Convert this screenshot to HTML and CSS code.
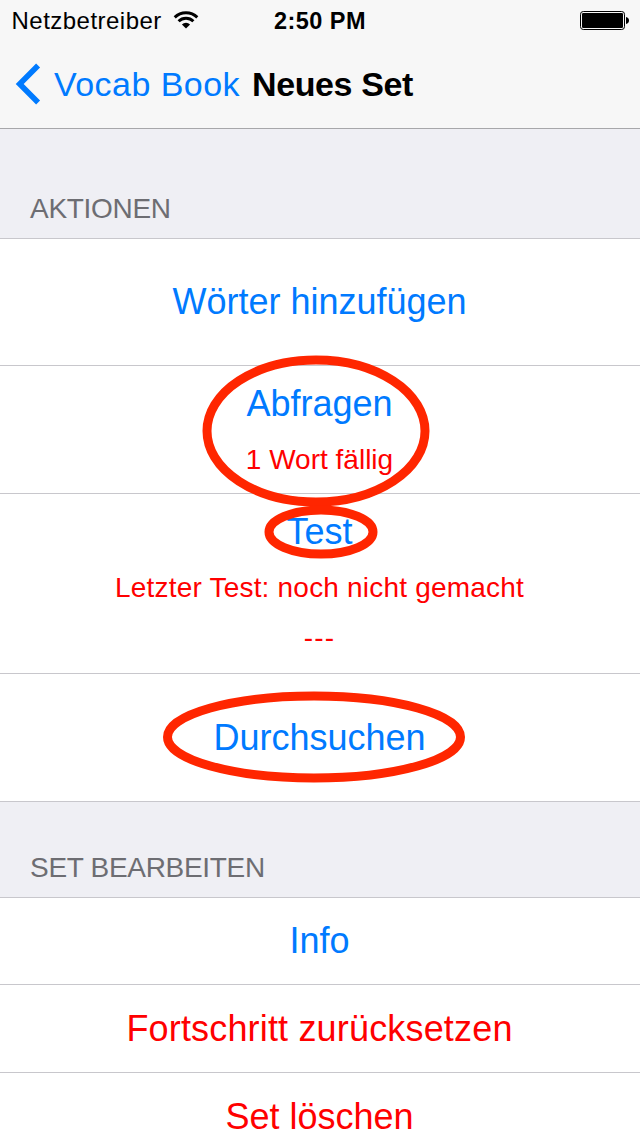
FILE: index.html
```html
<!DOCTYPE html>
<html lang="de">
<head>
<meta charset="utf-8">
<title>Neues Set</title>
<link rel="stylesheet" href="styles.css">
</head>
<body>
<div class="screen">
  <header class="top">
    <div class="status">
      <div class="carrier"><span>Netzbetreiber</span>
        <svg class="wifi" width="26" height="18" viewBox="0 0 26 18" fill="none" stroke="#000" stroke-width="2.900">
          <path d="M1.700 6.400A16 16 0 0 1 24.300 6.400"/>
          <path d="M5.600 10.300A10.500 10.500 0 0 1 20.400 10.300"/>
          <path d="M13 17.400L8.900 13.400A5.900 5.900 0 0 1 17.100 13.400Z" fill="#000" stroke="none"/>
        </svg>
      </div>
      <div class="time">2:50 PM</div>
      <svg class="battery" width="49" height="20" viewBox="0 0 49 20">
        <rect x=".5" y=".5" width="44" height="18" rx="2.800" fill="none" stroke="#000"/>
        <rect x="2" y="2" width="41" height="15" rx="1.200"/>
        <path d="M46 6c2 .3 3 1.600 3 3.500s-1 3.200-3 3.500z"/>
      </svg>
    </div>
    <nav class="nav">
      <svg class="chevron" width="26" height="42" viewBox="0 0 26 42" fill="none" stroke="#007aff" stroke-width="5.600"><path d="M23.100 2.500L4.700 21L23.100 39.500"/></svg>
      <a class="back">Vocab Book</a>
      <h1 class="title">Neues Set</h1>
    </nav>
  </header>
  <main>
    <h2 class="section first"><span class="s-akt">AKTIONEN</span></h2>
    <div class="row add"><span class="label l-add">Wörter hinzufügen</span></div>
    <div class="row query"><span class="label l-query">Abfragen</span><span class="sub s-due">1 Wort fällig</span>
      <svg class="ring ring-query" width="228" height="152" viewBox="0 0 228 152"><ellipse cx="114" cy="76" rx="109" ry="71"/></svg>
    </div>
    <div class="row test"><span class="label l-test">Test</span><span class="sub s-last">Letzter Test: noch nicht gemacht</span><span class="sub score">---</span>
      <svg class="ring ring-test" width="114" height="54" viewBox="0 0 114 54"><ellipse cx="57" cy="27" rx="52" ry="22"/></svg>
    </div>
    <div class="row browse"><span class="label l-browse">Durchsuchen</span>
      <svg class="ring ring-browse" width="302" height="92" viewBox="0 0 302 92"><ellipse cx="151" cy="46" rx="146.500" ry="41"/></svg>
    </div>
    <h2 class="section second"><span class="s-edit">SET BEARBEITEN</span></h2>
    <div class="row info"><span class="label l-info">Info</span></div>
    <div class="row danger"><span class="label l-reset">Fortschritt zurücksetzen</span></div>
    <div class="row danger"><span class="label l-delete">Set löschen</span></div>
  </main>
</div>
</body>
</html>
```
FILE: styles.css
```css
* { box-sizing: border-box; }
body { margin: 0; font-family: "Liberation Sans", Arial, sans-serif; background: #fff; }
h1, h2 { margin: 0; font-weight: normal; }
svg { display: block; flex: none; }
span, a, h1, .time { white-space: nowrap; }
.screen { width: 640px; height: 1136px; overflow: hidden; background: #fff; }
.top { height: 129px; background: #f7f7f7; border-bottom: 1px solid #a7a7aa; }
.status { display: grid; grid-template-columns: 274px 1fr 60px; height: 40px; font-size: 24px; line-height: 42px; }
.carrier { display: flex; padding-left: 11.5px; letter-spacing: .48px; }
.wifi { margin: 10.5px 0 0 11.5px; }
.time { font-weight: bold; font-size: 23.5px; letter-spacing: .45px; }
.battery { margin-top: 11px; }
.nav { display: flex; height: 88px; padding-left: 15px; font-size: 34px; line-height: 88px; }
.chevron { margin-top: 23px; }
.back { margin-left: 13px; color: #007aff; letter-spacing: .45px; }
.title { margin-left: 12px; font-size: 34px; font-weight: bold; letter-spacing: -.38px; }
.section { padding-left: 30px; background: #efeff4; border-bottom: 1px solid #c8c7cc; color: #6d6d72; font-size: 28px; letter-spacing: -.3px; }
.first { height: 110px; padding-top: 50px; line-height: 60px; }
.second { height: 96px; padding-top: 36px; line-height: 60px; }
.row { position: relative; display: flex; flex-direction: column; align-items: center; border-bottom: 1px solid #c8c7cc; height: 88px; padding-right: 1px; }
.label { color: #007aff; font-size: 36px; line-height: 87px; }
.danger .label { color: #f00; }
.sub { color: #f00; font-size: 28px; line-height: 36px; padding-top: 1px; }
.add { height: 127px; }
.add .label { line-height: 126px; }
.query, .browse { height: 128px; }
.browse .label { line-height: 127px; }
.test { height: 180px; }
.query .label, .test .label { line-height: 75px; }
.s-last { letter-spacing: .2px; }
.score { line-height: 62px; letter-spacing: 1.2px; }
.l-reset { letter-spacing: .17px; }
.info { height: 87px; }
.info .label { line-height: 86px; }
.ring { position: absolute; z-index: 1; fill: none; stroke: #ff2600; stroke-width: 9px; }
.ring-query { left: 201.5px; top: -11.5px; }
.ring-test { left: 264.3px; top: 11px; }
.ring-browse { left: 163.2px; top: 16.5px; }
```
